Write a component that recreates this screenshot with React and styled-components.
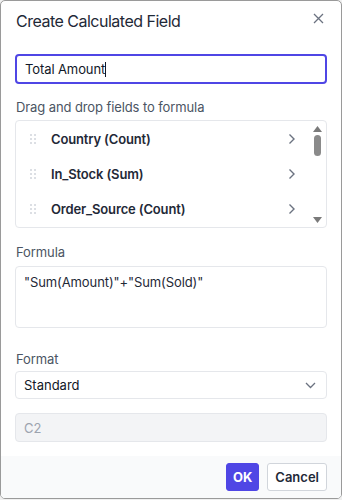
import React from "react";
import styled, { createGlobalStyle } from "styled-components";

const Global = createGlobalStyle`
  html, body { margin: 0; padding: 0; background: #f0f0f0; }
  body { font-family: Inter, "Noto Sans", Arial, sans-serif; }
  * { box-sizing: border-box; }
`;

const Dialog = styled.div`
  width: 342px;
  height: 499px;
  background: #fff;
  border: 1px solid #9a9a9a;
  border-radius: 5px;
  display: flex;
  flex-direction: column;
  overflow: hidden;
`;

const Header = styled.div`
  display: flex;
  align-items: center;
  justify-content: space-between;
  padding: 8px 16px 0 15px;
  height: 32px;
`;

const Title = styled.h1`
  margin: 0;
  font-size: 16px;
  font-weight: 400;
  color: #1f2937;
  letter-spacing: -0.5px;
`;

const CloseBtn = styled.button`
  border: 0;
  background: none;
  padding: 0;
  width: 14px;
  height: 14px;
  display: flex;
  align-items: center;
  justify-content: center;
  color: #6b7280;
  margin-top: -6px;
`;

const Body = styled.div`
  flex: 1;
  display: flex;
  flex-direction: column;
  padding: 21px 14px 0 14px;
`;

const TextInput = styled.div`
  height: 30px;
  border: 2px solid #4f46e5;
  border-radius: 4px;
  display: flex;
  align-items: center;
  padding: 0 8px;
  font-size: 13px;
  color: #111827;
  letter-spacing: -0.1px;
`;

const Caret = styled.span`
  display: inline-block;
  width: 1px;
  height: 15px;
  background: #111827;
`;

const Label = styled.div`
  font-size: 13px;
  color: #4b5563;
  margin-top: ${(p) => p.$mt}px;
  margin-bottom: ${(p) => p.$mb}px;
  padding-left: 1px;
  letter-spacing: -0.1px;
`;

const ListBox = styled.div`
  height: 108px;
  border: 1px solid #e5e7eb;
  border-radius: 4px;
  display: flex;
  overflow: hidden;
`;

const Rows = styled.div`
  flex: 1;
  display: flex;
  flex-direction: column;
`;

const Row = styled.div`
  height: 36px;
  display: flex;
  align-items: center;
  padding-left: 14px;
  padding-right: 14px;
  font-size: 13px;
  font-weight: 600;
  color: #1f2937;
  letter-spacing: -0.15px;
`;

const Grip = styled.span`
  width: 6px;
  height: 10px;
  display: grid;
  grid-template-columns: 2px 2px;
  column-gap: 2px;
  row-gap: 2px;
  margin-right: 15px;
  & > i {
    width: 2px;
    height: 2px;
    background: #d1d5db;
    border-radius: 1px;
  }
`;

const RowText = styled.span`
  flex: 1;
`;

const Scrollbar = styled.div`
  width: 14px;
  display: flex;
  flex-direction: column;
  align-items: center;
  justify-content: space-between;
  padding: 5px 0 4px;
  margin-right: 2px;
`;

const Thumb = styled.div`
  width: 7px;
  height: 21px;
  border-radius: 4px;
  background: #8a8a8a;
  margin-top: 3px;
`;

const Track = styled.div`
  flex: 1;
  display: flex;
  flex-direction: column;
  align-items: center;
`;

const Formula = styled.div`
  height: 62px;
  border: 1px solid #e5e7eb;
  border-radius: 4px;
  padding: 7px 8px;
  font-size: 13px;
  color: #1f2937;
  letter-spacing: -0.1px;
`;

const Select = styled.div`
  height: 28px;
  border: 1px solid #e5e7eb;
  border-radius: 4px;
  display: flex;
  align-items: center;
  justify-content: space-between;
  padding: 0 10px 0 8px;
  font-size: 13px;
  color: #111827;
`;

const Disabled = styled.div`
  height: 29px;
  margin-top: 14px;
  border: 1px solid #e5e7eb;
  border-radius: 4px;
  background: #f3f4f6;
  display: flex;
  align-items: center;
  padding: 0 8px;
  font-size: 13px;
  color: #9ca3af;
`;

const Footer = styled.div`
  height: 42px;
  background: #f9fafb;
  display: flex;
  justify-content: flex-end;
  align-items: flex-start;
  gap: 8px;
  padding: 7px 14px 0;
`;

const Button = styled.button`
  height: 28px;
  padding: 0 ${(p) => (p.$primary ? 6 : 7)}px;
  border-radius: 3px;
  font-family: inherit;
  font-size: 13px;
  font-weight: ${(p) => (p.$primary ? 700 : 600)};
  border: 1px solid ${(p) => (p.$primary ? "#4f46e5" : "#d1d5db")};
  background: ${(p) => (p.$primary ? "#4f46e5" : "#fff")};
  color: ${(p) => (p.$primary ? "#fff" : "#1f2937")};
`;

const Chevron = () => (
  <svg width="8" height="12" viewBox="0 0 8 12" fill="none">
    <path d="M1.5 1.5L6 6L1.5 10.5" stroke="#6b7280" strokeWidth="1.4" />
  </svg>
);

const fields = ["Country (Count)", "In_Stock (Sum)", "Order_Source (Count)"];

export default function App() {
  return (
    <>
      <Global />
      <Dialog>
        <Header>
          <Title>Create Calculated Field</Title>
          <CloseBtn aria-label="close">
            <svg width="11" height="11" viewBox="0 0 11 11">
              <path d="M1 1L10 10M10 1L1 10" stroke="#6b7280" strokeWidth="1.3" />
            </svg>
          </CloseBtn>
        </Header>
        <Body>
          <TextInput>
            Total Amount
            <Caret />
          </TextInput>
          <Label $mt={15} $mb={5}>Drag and drop fields to formula</Label>
          <ListBox>
            <Rows>
              {fields.map((f) => (
                <Row key={f}>
                  <Grip>
                    <i /><i /><i /><i /><i /><i />
                  </Grip>
                  <RowText>{f}</RowText>
                  <Chevron />
                </Row>
              ))}
            </Rows>
            <Scrollbar>
              <Track>
                <svg width="9" height="6" viewBox="0 0 9 6">
                  <path d="M4.5 0L9 6H0Z" fill="#7a7a7a" />
                </svg>
                <Thumb />
              </Track>
              <svg width="9" height="6" viewBox="0 0 9 6">
                <path d="M0 0H9L4.5 6Z" fill="#7a7a7a" />
              </svg>
            </Scrollbar>
          </ListBox>
          <Label $mt={16} $mb={6}>Formula</Label>
          <Formula>"Sum(Amount)"+"Sum(Sold)"</Formula>
          <Label $mt={23} $mb={4}>Format</Label>
          <Select>
            Standard
            <svg width="11" height="7" viewBox="0 0 11 7">
              <path d="M1 1L5.5 5.5L10 1" stroke="#6b7280" strokeWidth="1.3" fill="none" />
            </svg>
          </Select>
          <Disabled>C2</Disabled>
        </Body>
        <Footer>
          <Button $primary>OK</Button>
          <Button>Cancel</Button>
        </Footer>
      </Dialog>
    </>
  );
}
